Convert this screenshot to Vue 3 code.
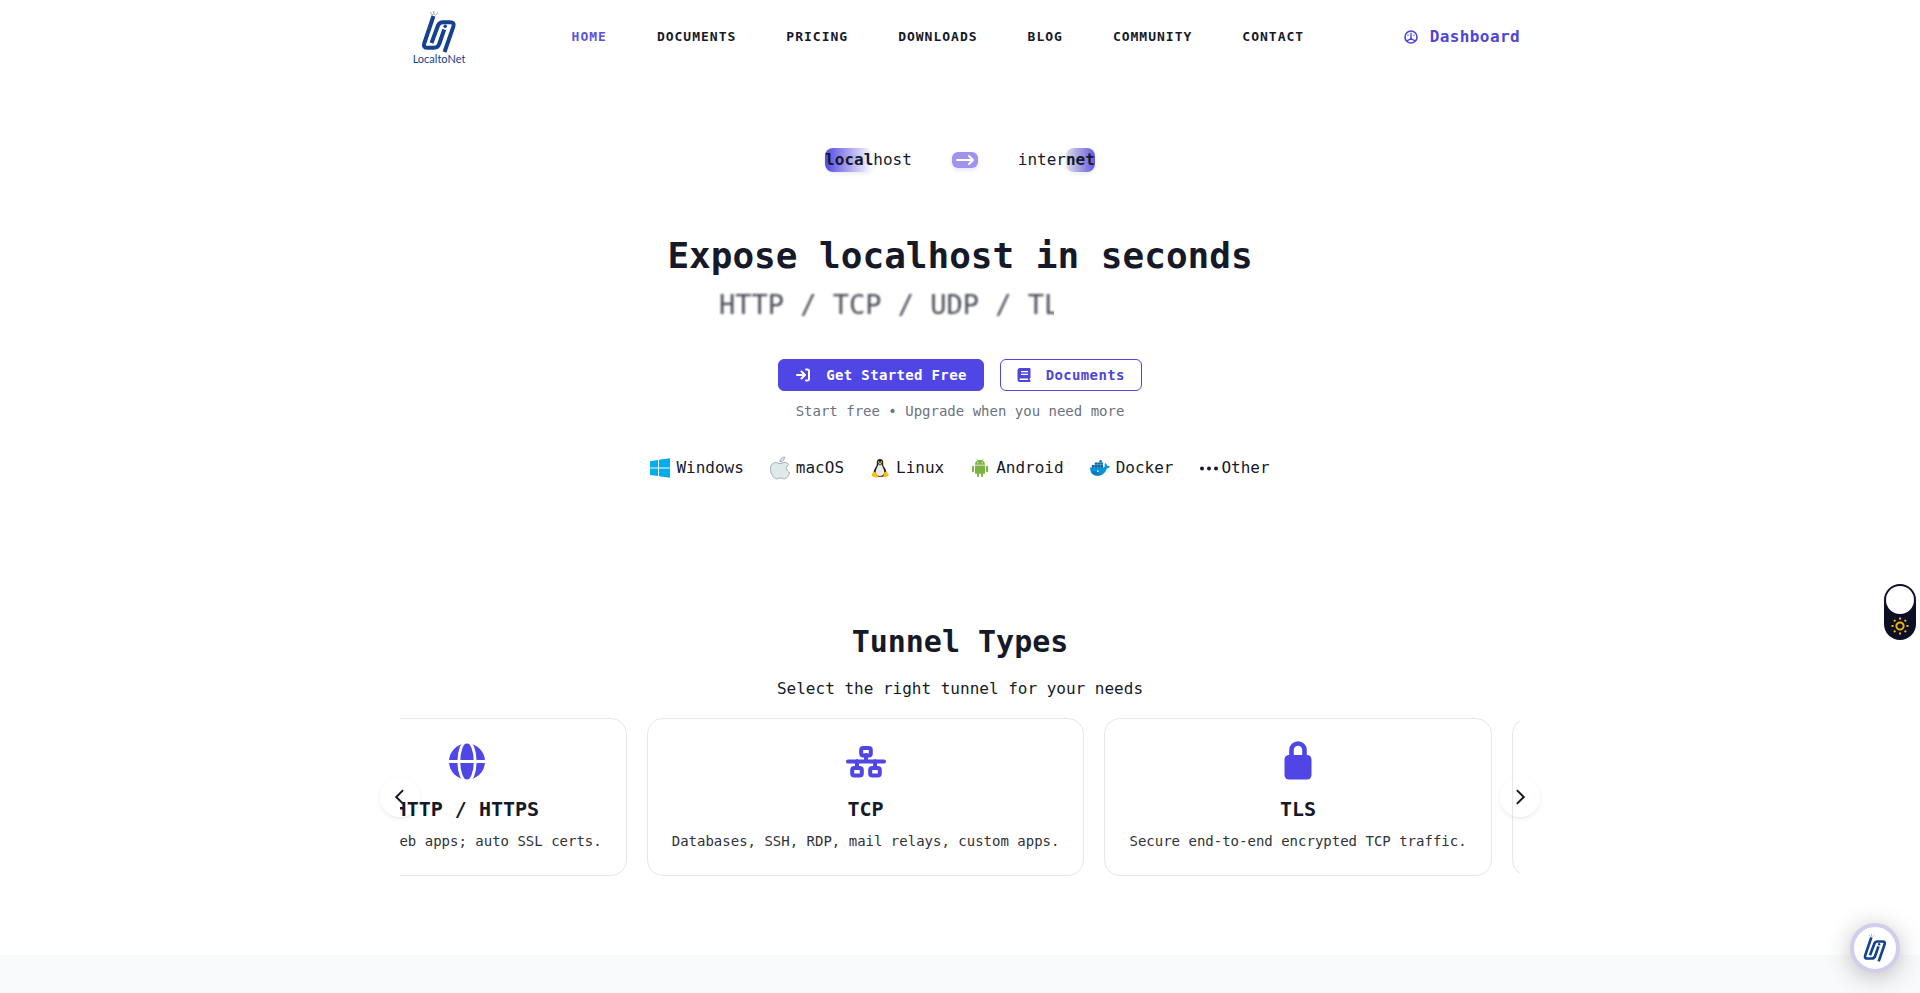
<template>
  <div class="page">
    <header class="header container">
      <a href="#" class="brand" aria-label="LocaltoNet">
        <svg class="brand-mark" viewBox="0 0 36 42" aria-hidden="true">
          <use href="#ln-mark" />
        </svg>
        <span class="brand-name">LocaltoNet</span>
      </a>
      <nav class="nav">
        <a v-for="item in navItems" :key="item" href="#" class="nav-link" :class="{ active: item === activeItem }">{{ item }}</a>
      </nav>
      <a href="#" class="dashboard">
        <svg class="dashboard-icon" viewBox="0 0 14 14" fill="none" stroke="currentColor" aria-hidden="true">
          <circle cx="7" cy="7" r="6" stroke-width="1.6" />
          <path d="M7 3.2v5M4 5.2v.1M10 5.2v.1M3.4 10.6c2-1.4 5.2-1.4 7.2 0" stroke-width="1.4" stroke-linecap="round" />
          <circle cx="7" cy="8.6" r="1.2" fill="currentColor" stroke="none" />
        </svg>
        <span>Dashboard</span>
      </a>
    </header>

    <main>
      <section class="hero container">
        <div class="route">
          <span><b class="mark-local">local</b>host</span>
          <span class="route-arrow">
            <svg viewBox="0 0 26 16" fill="none" stroke="#fff" stroke-width="2" stroke-linecap="round" stroke-linejoin="round" aria-hidden="true">
              <path d="M5 8h16M17 4l4 4-4 4" />
            </svg>
          </span>
          <span>inter<b class="mark-net">net</b></span>
        </div>
        <h1 class="title">Expose localhost in seconds</h1>
        <div class="protocols">
          <div class="protocols-typed"><span>HTTP / TCP / UDP / TLS</span></div>
        </div>
        <div class="actions">
          <button type="button" class="btn btn-primary">
            <svg class="btn-icon" viewBox="0 0 16 16" fill="none" stroke="currentColor" stroke-width="2" stroke-linecap="round" stroke-linejoin="round" aria-hidden="true">
              <path d="M2 8h7.5M6.5 4.5L10 8l-3.500 3.500M11 2.500h1.500a1.500 1.500 0 0 1 1.500 1.500v8a1.500 1.500 0 0 1-1.500 1.500H11" />
            </svg>
            Get Started Free
          </button>
          <button type="button" class="btn btn-outline">
            <svg class="btn-icon book" viewBox="0 0 14 14" fill="currentColor" aria-hidden="true">
              <path fill-rule="evenodd" d="M3 0h9.500a1 1 0 0 1 1 1v8.500a1 1 0 0 1-.8 1V12a1 1 0 0 1-.2 2H3a2.500 2.500 0 0 1-2.500-2.500v-9A2.500 2.500 0 0 1 3 0zM4 3v1.300h7V3zM4 5.800v1.300h7V5.800zM3.200 10.500a.8.8 0 0 0 0 1.600h7.800v-1.600z" />
            </svg>
            Documents
          </button>
        </div>
        <p class="hint">Start free • Upgrade when you need more</p>
        <ul class="platforms">
          <li class="platform">
            <svg viewBox="0 0 20 20" aria-hidden="true">
              <path fill="#00adef" d="M0 3.200L8 2v7.500H0zM9 1.800L20 .3v9.200H9zM0 10.500h8V18l-8-1.100zM9 10.500h11v9.200L9 18.200z" />
            </svg>
            Windows
          </li>
          <li class="platform">
            <svg class="large" viewBox="0 0 20 24" fill="#dfe9ea" stroke="#929ca8" stroke-width=".8" aria-hidden="true">
              <path d="M14.500 1c.3 2.600-2 5-4.500 5C9.700 3.600 12 1.200 14.500 1z" />
              <path d="M18.800 8.500c-3.400 2.200-2.700 6.600.9 8.100-1 2.900-3.200 6.300-5.400 6.300-1.500 0-2-.9-3.900-.9-1.900 0-2.500.9-3.900.9C3.600 22.900.4 17.400.4 12.900.4 8.800 3 6.600 5.700 6.600c1.800 0 3.200 1.100 4.300 1.100 1.100 0 2.700-1.200 4.800-1.200 1.600 0 3.100.8 4 2z" />
            </svg>
            macOS
          </li>
          <li class="platform">
            <svg viewBox="0 0 20 20" aria-hidden="true">
              <path fill="#202020" d="M10 1c-2.400 0-3.300 1.600-3.200 4 .1 2-.4 3-1.500 4.700-1 1.600-1.900 3.400-1.700 5.800l3 3.200h6.800l3-3.200c.1-2.500-.7-4.300-1.900-6-1.200-1.600-1.400-2.500-1.300-4.500C13.300 2.600 12.400 1 10 1z" />
              <path fill="#ececec" d="M8.300 6.300c-.2 2-2.600 5-2.600 7.800 0 2.700 2 4 4.300 4s4.300-1.300 4.300-4c0-2.800-2.400-5.800-2.600-7.800L10 7.500z" />
              <path fill="#fbbd11" d="M8.200 5.400l1.800-1 1.800 1L10 6.700zM3.600 13.200l2.200 1.300 2.300 3.200c.3 1.500-.7 2.100-2 1.800l-3.900-1c-.7-.3-.4-1-.2-1.600-.2-1 0-1.400.8-1.600zM16.400 13.200l-2.200 1.200-.9 3.300c0 1.600 1.400 2.100 2.500 1.300l2.600-1.600c.6-.5.3-1-.4-1.300-.4-.6-.3-1.500-.7-1.900z" />
              <circle cx="8.700" cy="4" r=".7" fill="#fff" />
              <circle cx="11.300" cy="4" r=".7" fill="#fff" />
            </svg>
            Linux
          </li>
          <li class="platform">
            <svg viewBox="0 0 20 20" fill="#7cb342" aria-hidden="true">
              <path d="M5 6.800C5 4.100 7 2.100 10 2.100s5 2 5 4.700zM5 7.500h10v7.200c0 .6-.4 1-1 1H6c-.6 0-1-.4-1-1z" />
              <path d="M3 8.700v4.600M17 8.700v4.600M8 14.500v3.500M12 14.500v3.500" stroke="#7cb342" stroke-width="2" stroke-linecap="round" />
              <path d="M6.500 .8L8 3M13.500 .8L12 3" stroke="#7cb342" stroke-width=".6" />
              <circle cx="7.800" cy="4.700" r=".6" fill="#fff" />
              <circle cx="12.200" cy="4.700" r=".6" fill="#fff" />
            </svg>
            Android
          </li>
          <li class="platform">
            <svg class="docker" viewBox="0 0 22 20" aria-hidden="true">
              <path fill="#0794d8" d="M0 9.500h15.400c1-1 1-2.600.7-4l.9-1c1.300 1 1.700 2 1.700 3.200 1-.3 2.200-.2 3.100.4-.4 1.200-1.600 2.200-3.200 2.300C17.200 15.200 13.800 18.500 9 18.500c-5.500 0-9-3-9-9z" />
              <path fill="#086aa8" d="M2 6.600h3v3H2zM5.200 6.600h3v3h-3zM8.400 6.600h3v3h-3zM11.600 6.600h2.800v3h-2.800zM5.200 4h3v2.400h-3zM8.400 4h3v2.400h-3zM11.600 4h2.600v2.400h-2.600zM10.400 1.500H13v2.300h-2.600z" />
              <path fill="#0b77bd" d="M.7 13.200c3 1 5.300.6 7.300-.3 1 2.500 2.500 4.200 5 4.600-4.200 1.800-10.500 1-12.300-4.300z" />
              <circle cx="8.600" cy="13.500" r=".9" fill="#fff" />
            </svg>
            Docker
          </li>
          <li class="platform other">
            <svg viewBox="0 0 20 20" fill="#181b29" aria-hidden="true">
              <circle cx="3" cy="10.500" r="2" />
              <circle cx="10" cy="10.500" r="2" />
              <circle cx="17" cy="10.500" r="2" />
            </svg>
            Other
          </li>
        </ul>
      </section>

      <section class="tunnels container">
        <h2 class="section-title">Tunnel Types</h2>
        <p class="section-text">Select the right tunnel for your needs</p>
        <div class="carousel">
          <div ref="viewportRef" class="viewport">
            <article v-for="tunnel in tunnels" :key="tunnel.name" class="card">
              <svg class="card-icon" viewBox="0 0 40 40" aria-hidden="true">
                <g v-if="tunnel.icon === 'globe'">
                  <circle cx="20" cy="20.500" r="18" fill="#4f46e5" />
                  <ellipse cx="20" cy="20.500" rx="8.200" ry="20" fill="none" stroke="#fff" stroke-width="2.800" />
                  <path d="M0 20.500h40" stroke="#fff" stroke-width="3" />
                </g>
                <g v-else-if="tunnel.icon === 'network'" fill="none" stroke="#4f46e5" stroke-width="4">
                  <path d="M2 20.500h36M20 14v6M11 20v6M29 20v6" stroke-linecap="round" />
                  <rect x="15.200" y="7" width="9.600" height="7.500" rx="2" />
                  <rect x="6.200" y="27" width="9.600" height="7.500" rx="2" />
                  <rect x="24.200" y="27" width="9.600" height="7.500" rx="2" />
                </g>
                <g v-else>
                  <path d="M13.500 16V9a6.500 6.500 0 0 1 13 0v7" fill="none" stroke="#4f46e5" stroke-width="4.600" />
                  <rect x="6.500" y="14" width="27" height="24.500" rx="4.500" fill="#4f46e5" />
                </g>
              </svg>
              <h3 class="card-title">{{ tunnel.name }}</h3>
              <p class="card-text">{{ tunnel.text }}</p>
            </article>
          </div>
          <button type="button" class="arrow arrow-prev" aria-label="Previous" @click="slide(-1)">
            <svg viewBox="0 0 16 16"><path d="M10.500 2.500L5 8l5.500 5.500" /></svg>
          </button>
          <button type="button" class="arrow arrow-next" aria-label="Next" @click="slide(1)">
            <svg viewBox="0 0 16 16"><path d="M5.500 2.500L11 8l-5.500 5.500" /></svg>
          </button>
        </div>
      </section>

      <section class="next-section"></section>
    </main>

    <label class="theme-toggle">
      <input v-model="dark" type="checkbox" class="theme-input" aria-label="Dark mode" />
      <span class="knob"></span>
      <svg class="sun" viewBox="0 0 18 18" fill="none" stroke="#eab308" stroke-width="2" aria-hidden="true">
        <circle cx="9" cy="9" r="3.600" />
        <path d="M9 .5v2M9 15.500v2M.5 9h2M15.500 9h2M3 3l1.400 1.400M13.600 13.600L15 15M3 15l1.400-1.400M13.600 4.400L15 3" />
      </svg>
    </label>

    <button type="button" class="chat" aria-label="Chat">
      <svg viewBox="0 0 36 42" aria-hidden="true">
        <g id="ln-mark" fill="none" stroke="#14428f" stroke-width="4" stroke-linejoin="round">
          <path d="M12.500 5L3.200 32.500Q2 36.800 6.500 36.800H13Q17 36.800 18.200 33L23.200 18.500" />
          <path d="M10.500 32L17 14.500Q18.300 11.200 22 11.200H29Q33.800 11.200 32.400 15.500L23.500 41" />
          <path d="M24.200 15.200v.1" stroke-width="3.600" stroke-linecap="round" />
          <path d="M13 4l-.3-4M11.500 4L9 1.200M14.500 4.200L17 1.800" stroke="#7d9cc9" stroke-width="1" />
        </g>
      </svg>
    </button>
  </div>
</template>

<script setup>
import { ref, onMounted } from 'vue';

const navItems = ['HOME', 'DOCUMENTS', 'PRICING', 'DOWNLOADS', 'BLOG', 'COMMUNITY', 'CONTACT'];
const activeItem = ref('HOME');
const dark = ref(false);
const viewportRef = ref(null);

const tunnels = [
  { name: 'HTTP / HTTPS', text: 'Public web apps; auto SSL certs.', icon: 'globe' },
  { name: 'TCP', text: 'Databases, SSH, RDP, mail relays, custom apps.', icon: 'network' },
  { name: 'TLS', text: 'Secure end-to-end encrypted TCP traffic.', icon: 'lock' },
  { name: 'UDP', text: 'Game servers, VoIP and streaming.', icon: 'network' },
];

const slide = (direction) => {
  viewportRef.value.scrollBy({ left: direction * 320, behavior: 'smooth' });
};

// Start part way along so the second card sits near the middle
onMounted(() => {
  viewportRef.value.scrollLeft = 93;
});
</script>

<style>
body {
  margin: 0;
  background: #fff;
}
</style>

<style scoped>
.page {
  font-family: "DejaVu Sans Mono", monospace;
  font-size: 16px;
  line-height: 24px;
  color: #151928;
}

.page h1,
.page h2,
.page h3,
.page p,
.page ul {
  margin: 0;
  padding: 0;
}

.page button {
  font-family: inherit;
  cursor: pointer;
}

.container {
  max-width: 1120px;
  margin: 0 auto;
}

.header {
  display: flex;
  align-items: center;
  justify-content: space-between;
  height: 74px;
}

.brand {
  display: flex;
  flex-direction: column;
  align-items: center;
  width: 54px;
  padding: 2px 6px 0 12px;
  color: #14428f;
  text-decoration: none;
}

.brand-mark {
  width: 36px;
  height: 42px;
  overflow: visible;
}

.brand-name {
  font-family: Lato, sans-serif;
  font-size: 11px;
  line-height: 12px;
}

.nav {
  display: flex;
  gap: 50px;
}

.nav-link {
  font-size: 13px;
  font-weight: bold;
  letter-spacing: 1px;
  color: #151928;
  text-decoration: none;
}

.nav-link.active {
  color: #5b50e0;
}

.dashboard {
  display: flex;
  align-items: center;
  gap: 12px;
  font-weight: bold;
  letter-spacing: 0.025em;
  color: #4f46d8;
  text-decoration: none;
}

.dashboard-icon {
  width: 14px;
  height: 14px;
}

.hero {
  display: flex;
  flex-direction: column;
  align-items: center;
  padding-top: 74px;
}

.route {
  display: flex;
  align-items: center;
  gap: 40px;
}

.mark-local,
.mark-net {
  display: inline-block;
  border-radius: 8px;
  box-shadow: 0 2px 4px rgba(0, 0, 0, 0.08);
}

.mark-local {
  background: linear-gradient(90deg, #5449e2, #fff);
}

.mark-net {
  background: linear-gradient(90deg, #dcdde2, #6258e8);
}

.route-arrow {
  width: 26px;
  height: 16px;
  border-radius: 6px;
  background: #9d94ed;
  box-shadow: 0 2px 4px rgba(79, 70, 229, 0.15);
}

.route-arrow svg {
  display: block;
}

.page .title {
  margin-top: 62px;
  font-size: 36px;
  line-height: 44px;
}

.protocols {
  width: 486px;
  margin-top: 9px;
  font-size: 27px;
  line-height: 36px;
  color: #4b4d57;
}

.protocols-typed {
  width: 69%;
  margin-left: 2px;
  overflow: hidden;
  white-space: nowrap;
}

.protocols-typed span {
  display: inline-block;
  filter: blur(1px);
}

.actions {
  display: flex;
  gap: 16px;
  margin-top: 36px;
}

.btn {
  display: flex;
  align-items: center;
  gap: 15px;
  height: 32px;
  padding: 0 16px;
  border: 1px solid #4f46e5;
  border-radius: 6px;
  font-size: 14px;
  font-weight: bold;
  letter-spacing: 0.025em;
}

.btn-primary {
  background: #4f46e5;
  color: #fff;
}

.btn-outline {
  background: #fff;
  color: #4f46d8;
}

.btn-icon {
  width: 16px;
  height: 16px;
}

.btn-icon.book {
  width: 14px;
  height: 14px;
}

.page .hint {
  margin-top: 10px;
  font-size: 14px;
  line-height: 20px;
  color: #6b7280;
}

.page .platforms {
  display: flex;
  gap: 26px;
  margin-top: 35px;
  list-style: none;
}

.platform {
  display: flex;
  align-items: center;
  gap: 6px;
}

.platform.other {
  gap: 2px;
}

.platform svg {
  width: 20px;
  height: 20px;
}

.platform svg.large {
  height: 24px;
}

.platform svg.docker {
  overflow: visible;
}

.tunnels {
  padding-top: 144px;
  padding-bottom: 79px;
  text-align: center;
}

.section-title {
  font-size: 30px;
  line-height: 36px;
}

.page .section-text {
  margin-top: 17px;
}

.carousel {
  position: relative;
  margin-top: 17px;
}

.viewport {
  display: flex;
  gap: 20px;
  overflow: hidden;
}

.card {
  flex: none;
  padding: 22px 24px 24px;
  border: 1px solid #e5e7eb;
  border-radius: 16px;
}

.card-icon {
  display: block;
  width: 40px;
  height: 40px;
  margin: 0 auto 14px;
}

.card-title {
  font-size: 20px;
  line-height: 28px;
}

.page .card-text {
  margin-top: 8px;
  font-size: 14px;
  line-height: 20px;
  color: #303238;
}

.arrow {
  position: absolute;
  top: 50%;
  display: flex;
  align-items: center;
  justify-content: center;
  width: 40px;
  height: 40px;
  padding: 0;
  border: none;
  border-radius: 50%;
  background: transparent;
  box-shadow: 0 2px 4px rgba(0, 0, 0, 0.08);
  transform: translateY(-50%);
}

.arrow svg {
  width: 20px;
  height: 20px;
  fill: none;
  stroke: #151928;
  stroke-width: 1.6;
}

.arrow-prev {
  left: -20px;
}

.arrow-next {
  right: -20px;
}

.next-section {
  height: 38px;
  background: #f9fafb;
}

.theme-toggle {
  position: fixed;
  top: 584px;
  right: 4px;
  display: flex;
  flex-direction: column;
  align-items: center;
  gap: 3px;
  box-sizing: border-box;
  width: 32px;
  height: 56px;
  padding: 2px;
  border-radius: 16px;
  background: #0d1024;
  cursor: pointer;
}

.theme-input {
  position: absolute;
  margin: 0;
  opacity: 0;
}

.knob {
  width: 28px;
  height: 28px;
  border-radius: 50%;
  background: #fff;
}

.sun {
  width: 18px;
  height: 18px;
}

.chat {
  position: fixed;
  right: 20px;
  bottom: 20px;
  display: flex;
  align-items: center;
  justify-content: center;
  width: 50px;
  height: 50px;
  padding: 0;
  border: 4px solid #d3cdec;
  border-radius: 50%;
  background: #fff;
  box-shadow: 0 4px 24px rgba(0, 0, 0, 0.25);
}

.chat svg {
  width: 24px;
  height: 28px;
  overflow: visible;
}
</style>
